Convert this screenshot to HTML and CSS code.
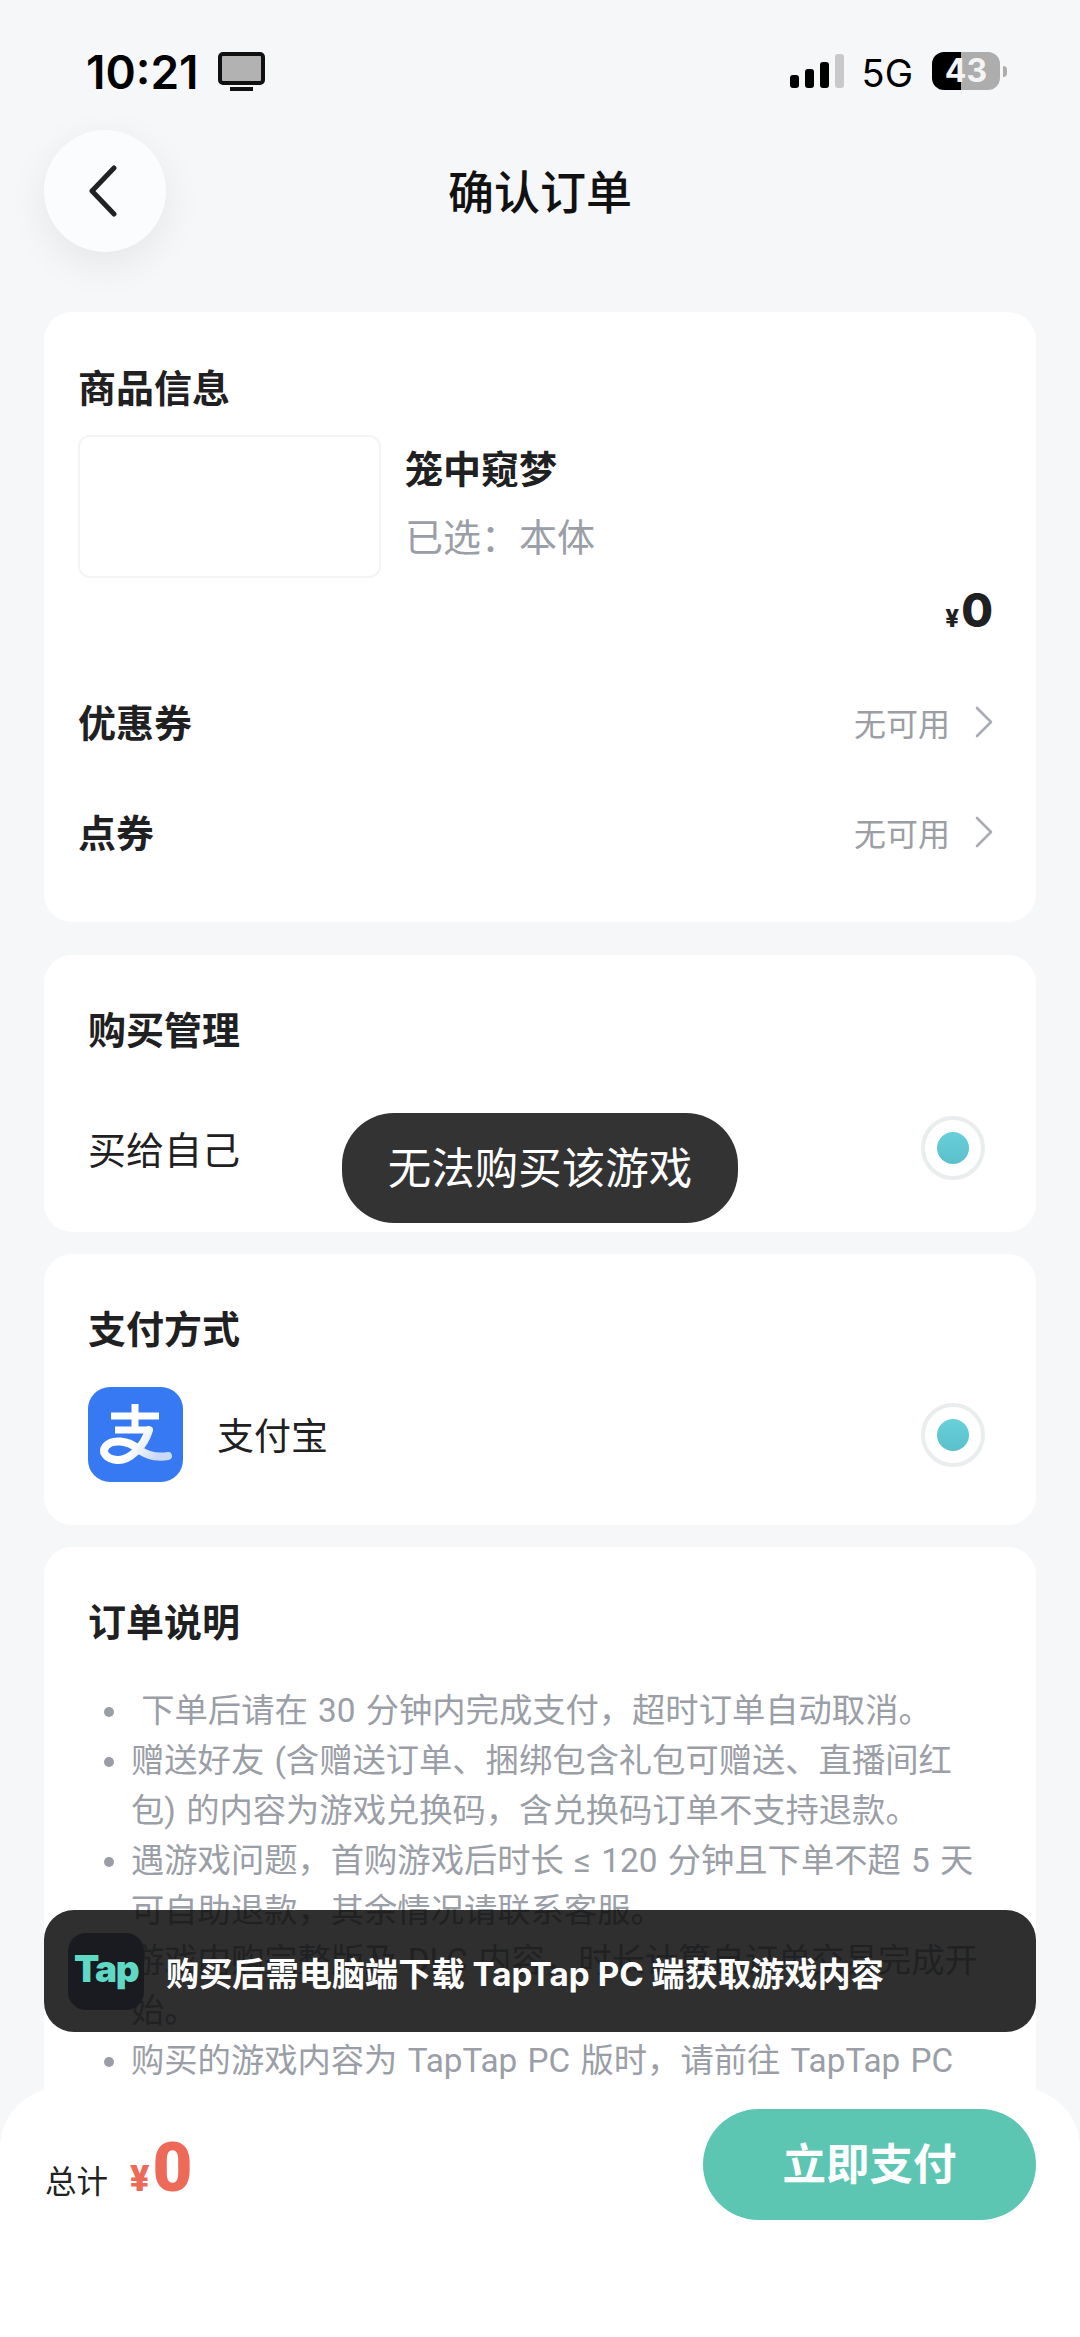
FILE: index.html
```html
<!DOCTYPE html>
<html lang="zh-CN">
<head>
    <meta charset="UTF-8">
    <meta name="viewport" content="width=device-width, initial-scale=1.0">
    <title>确认订单</title>
    <link rel="stylesheet" href="styles.css">
</head>
<body>
    <div class="page">
        <div class="status-bar">
            <div class="status-left">
                <span class="clock">10:21</span>
                <span class="monitor"><span class="monitor-screen"></span><span class="monitor-stand"></span></span>
            </div>
            <div class="status-right">
                <span class="signal">
                    <span class="signal-bar bar-1"></span>
                    <span class="signal-bar bar-2"></span>
                    <span class="signal-bar bar-3"></span>
                    <span class="signal-bar bar-4"></span>
                </span>
                <span class="network">5G</span>
                <span class="battery">43</span>
                <span class="battery-nub"></span>
            </div>
        </div>

        <div class="nav-bar">
            <div class="back-btn">
                <svg width="32" height="52" viewBox="0 0 32 52"><path d="M27 3 L5 26 L27 49" fill="none" stroke="#222" stroke-width="5" stroke-linecap="round" stroke-linejoin="round"/></svg>
            </div>
            <div class="nav-title">确认订单</div>
        </div>

        <section class="card card-goods">
            <h2 class="card-title">商品信息</h2>
            <div class="goods">
                <div class="goods-thumb"></div>
                <div class="goods-info">
                    <div class="goods-name">笼中窥梦</div>
                    <div class="goods-sku">已选：本体</div>
                </div>
            </div>
            <div class="goods-price"><span class="yen">¥</span>0</div>
            <div class="row row-coupon">
                <span class="row-label">优惠券</span>
                <span class="row-value">无可用
                    <svg width="18" height="32" viewBox="0 0 18 32"><path d="M2 2 L16 16 L2 30" fill="none" stroke="#a9adb3" stroke-width="2.6" stroke-linecap="round" stroke-linejoin="round"/></svg>
                </span>
            </div>
            <div class="row row-points">
                <span class="row-label">点券</span>
                <span class="row-value">无可用
                    <svg width="18" height="32" viewBox="0 0 18 32"><path d="M2 2 L16 16 L2 30" fill="none" stroke="#a9adb3" stroke-width="2.6" stroke-linecap="round" stroke-linejoin="round"/></svg>
                </span>
            </div>
        </section>

        <section class="card card-buy">
            <h2 class="card-title">购买管理</h2>
            <div class="option option-self">
                <span class="option-label">买给自己</span>
                <span class="radio"><span class="radio-dot"></span></span>
            </div>
        </section>

        <section class="card card-pay">
            <h2 class="card-title">支付方式</h2>
            <div class="option option-pay">
                <span class="alipay">
                    <svg width="95" height="95" viewBox="0 0 95 95">
                        <defs>
                            <linearGradient id="ribbon" x1="0" y1="0" x2="1" y2="0.3">
                                <stop offset="0.55" stop-color="#fff"/>
                                <stop offset="1" stop-color="#c9d9f6"/>
                            </linearGradient>
                        </defs>
                        <rect width="95" height="95" rx="22" fill="#3779f3"/>
                        <path d="M23 29 H71 M47 17 V43 M27 43 H62" fill="none" stroke="#fff" stroke-width="7"/>
                        <path d="M61 43 C56 60 41 74 29 73 C18 72 13 65 18 59 C24 52 40 53 50 62 C58 68 68 71 80 69" fill="none" stroke="url(#ribbon)" stroke-width="8" stroke-linecap="round"/>
                    </svg>
                </span>
                <span class="pay-name">支付宝</span>
                <span class="radio"><span class="radio-dot"></span></span>
            </div>
        </section>

        <section class="card card-notes">
            <h2 class="card-title">订单说明</h2>
            <ul class="notes">
                <li>&nbsp;下单后请在 30 分钟内完成支付，超时订单自动取消。</li>
                <li>赠送好友 (含赠送订单、捆绑包含礼包可赠送、直播间红包) 的内容为游戏兑换码，含兑换码订单不支持退款。</li>
                <li>遇游戏问题，首购游戏后时长 ≤ 120 分钟且下单不超 5 天可自助退款，其余情况请联系客服。</li>
                <li>游戏内购完整版及 DLC 内容，时长计算自订单交易完成开始。</li>
                <li>购买的游戏内容为 TapTap PC 版时，请前往 TapTap PC 端下载并安装后游玩。</li>
            </ul>
        </section>

        <div class="toast">无法购买该游戏</div>

        <div class="tap-banner">
            <span class="tap-logo">Tap</span>
            <span class="tap-text">购买后需电脑端下载 TapTap PC 端获取游戏内容</span>
        </div>

        <div class="bottom-bar">
            <div class="total">
                <span class="total-label">总计</span>
                <span class="total-price"><span class="total-yen">¥</span>0</span>
            </div>
            <div class="pay-btn">立即支付</div>
        </div>
    </div>
</body>
</html>
```

FILE: styles.css
```css
* {
    box-sizing: border-box;
}
body {
    margin: 0;
    font-family: Inter, "Noto Sans CJK SC", sans-serif;
    color: #1f2022;
}
.page {
    position: relative;
    width: 1080px;
    height: 2337px;
    overflow: hidden;
    background-color: #f6f7f9;
}

/* Status bar */
.status-bar {
    display: flex;
    justify-content: space-between;
    height: 130px;
    padding: 46px 73px 0 86px;
}
.status-left {
    display: flex;
    align-items: flex-start;
    gap: 19px;
}
.clock {
    font-size: 46px;
    line-height: 52px;
    font-weight: 600;
    color: #000;
}
.monitor {
    display: flex;
    flex-direction: column;
    align-items: center;
    margin-top: 6px;
}
.monitor-screen {
    width: 47px;
    height: 33px;
    background-color: #b2b2b2;
    border: 4px solid #111;
    border-radius: 5px;
}
.monitor-stand {
    width: 23px;
    height: 4px;
    margin-top: 2px;
    background-color: #111;
}
.status-right {
    display: flex;
    align-items: flex-start;
}
.signal {
    display: flex;
    align-items: flex-end;
    gap: 6px;
    height: 34px;
    margin-top: 8px;
    margin-right: 18px;
}
.signal-bar {
    width: 9px;
    border-radius: 3px;
    background-color: #000;
}
.bar-1 { height: 13px; }
.bar-2 { height: 19px; }
.bar-3 { height: 26px; }
.bar-4 { height: 34px; background-color: #c9c9c9; }
.network {
    font-size: 38px;
    line-height: 44px;
    margin-top: 5px;
    margin-right: 19px;
    color: #000;
}
.battery {
    width: 68px;
    height: 38px;
    margin-top: 6px;
    border-radius: 12px;
    background: linear-gradient(90deg, #000 43%, #adadad 43%);
    color: #f4f4f4;
    font-size: 32px;
    line-height: 38px;
    font-weight: 700;
    text-align: center;
}
.battery-nub {
    width: 4px;
    height: 11px;
    margin: 20px 0 0 3px;
    border-radius: 0 4px 4px 0;
    background-color: #adadad;
}

/* Nav */
.nav-bar {
    display: grid;
    grid-template-columns: 122px 1fr 122px;
    align-items: center;
    padding: 0 44px;
    height: 122px;
}
.back-btn {
    display: flex;
    align-items: center;
    justify-content: center;
    width: 122px;
    height: 122px;
    padding-right: 4px;
    border-radius: 50%;
    background-color: #fbfcfd;
    box-shadow: 0 12px 40px rgba(0, 0, 0, 0.07);
}
.nav-title {
    padding-top: 2px;
    font-size: 46px;
    line-height: 60px;
    font-weight: 500;
    text-align: center;
    color: #111;
}

/* Cards */
.card {
    margin: 22px 44px 0;
    border-radius: 28px;
    background-color: #fff;
    padding: 50px 44px 44px;
}
.card-title {
    margin: 0;
    font-size: 38px;
    line-height: 50px;
    font-weight: 700;
}
.card-goods {
    height: 610px;
    margin-top: 60px;
    padding: 51px 43px 0 34px;
}
.goods {
    display: flex;
    gap: 24px;
    margin-top: 22px;
}
.goods-thumb {
    width: 303px;
    height: 143px;
    border: 2px solid #f3f4f6;
    border-radius: 12px;
}
.goods-name {
    margin-top: 9px;
    font-size: 38px;
    line-height: 50px;
    font-weight: 700;
}
.goods-sku {
    margin-top: 18px;
    font-size: 38px;
    line-height: 50px;
    color: #9a9ea6;
}
.goods-price {
    margin-top: 2px;
    font-size: 46px;
    line-height: 60px;
    font-weight: 800;
    text-align: right;
}
.yen {
    font-size: 24px;
    line-height: 1;
    margin-right: 2px;
}
.row {
    display: flex;
    justify-content: space-between;
    align-items: center;
    height: 60px;
}
.row-coupon {
    margin-top: 52px;
}
.row-points {
    margin-top: 50px;
}
.row-label {
    padding-bottom: 3px;
    font-size: 38px;
    font-weight: 700;
}
.row-value {
    display: flex;
    align-items: center;
    gap: 25px;
    font-size: 32px;
    color: #9b9ea4;
}
.card-buy {
    height: 277px;
    margin-top: 33px;
}
.option {
    display: flex;
    align-items: center;
}
.option-self {
    justify-content: space-between;
    margin-top: 61px;
}
.option-label {
    font-size: 38px;
    padding-bottom: 2px;
}
.radio {
    display: flex;
    align-items: center;
    justify-content: center;
    width: 64px;
    height: 64px;
    margin-right: 7px;
    border: 4px solid #e9eded;
    border-radius: 50%;
}
.radio-dot {
    width: 32px;
    height: 32px;
    border-radius: 50%;
    background: linear-gradient(180deg, #67d0da, #5bc0cc);
}
.card-pay {
    height: 271px;
}
.option-pay {
    margin-top: 33px;
}
.alipay {
    display: flex;
    width: 95px;
    height: 95px;
}
.pay-name {
    flex: 1;
    margin-left: 34px;
    padding-bottom: 2px;
    font-size: 37px;
}
.card-notes {
    height: 800px;
    padding-right: 51px;
}
.notes {
    margin: 39px 0 0;
    padding: 0 0 0 43px;
    font-family: Roboto, "Noto Sans CJK SC", sans-serif;
    font-size: 33.3px;
    line-height: 50px;
    word-spacing: 2px;
    color: #9a9ea6;
}

/* Overlays */
.toast {
    position: absolute;
    top: 1113px;
    left: 342px;
    width: 396px;
    height: 110px;
    border-radius: 52px;
    background-color: #333;
    color: #fff;
    font-size: 43.5px;
    line-height: 110px;
    text-align: center;
}
.tap-banner {
    position: absolute;
    top: 1910px;
    left: 44px;
    width: 992px;
    height: 122px;
    display: flex;
    align-items: center;
    padding-left: 24px;
    border-radius: 30px;
    background-color: rgba(10, 10, 10, 0.85);
}
.tap-logo {
    width: 76px;
    height: 77px;
    border-radius: 18px;
    background-color: #1a1b20;
    color: #5fd9c4;
    font-size: 37px;
    font-weight: 900;
    letter-spacing: -1.5px;
    line-height: 72px;
    text-align: center;
}
.tap-text {
    margin-left: 22px;
    color: #fff;
    font-size: 33.2px;
    font-weight: 700;
}
.bottom-bar {
    position: absolute;
    top: 2088px;
    left: 0;
    right: 0;
    bottom: 0;
    display: flex;
    justify-content: space-between;
    align-items: flex-start;
    padding: 21px 44px 0 45px;
    border-radius: 60px 60px 0 0;
    background-color: #fff;
}
.total {
    display: flex;
    align-items: center;
    margin-top: 19px;
}
.total-label {
    margin-top: 11px;
    font-size: 31.5px;
    color: #222;
}
.total-price {
    margin-left: 22px;
    font-family: Roboto, sans-serif;
    font-size: 69px;
    line-height: 80px;
    font-weight: 900;
    color: #ec6a57;
}
.total-yen {
    font-size: 36px;
    margin-right: 3px;
}
.pay-btn {
    width: 333px;
    height: 111px;
    border-radius: 56px;
    background-color: #5cc6b3;
    color: #fff;
    font-size: 43.5px;
    font-weight: 700;
    line-height: 111px;
    text-align: center;
}
```
